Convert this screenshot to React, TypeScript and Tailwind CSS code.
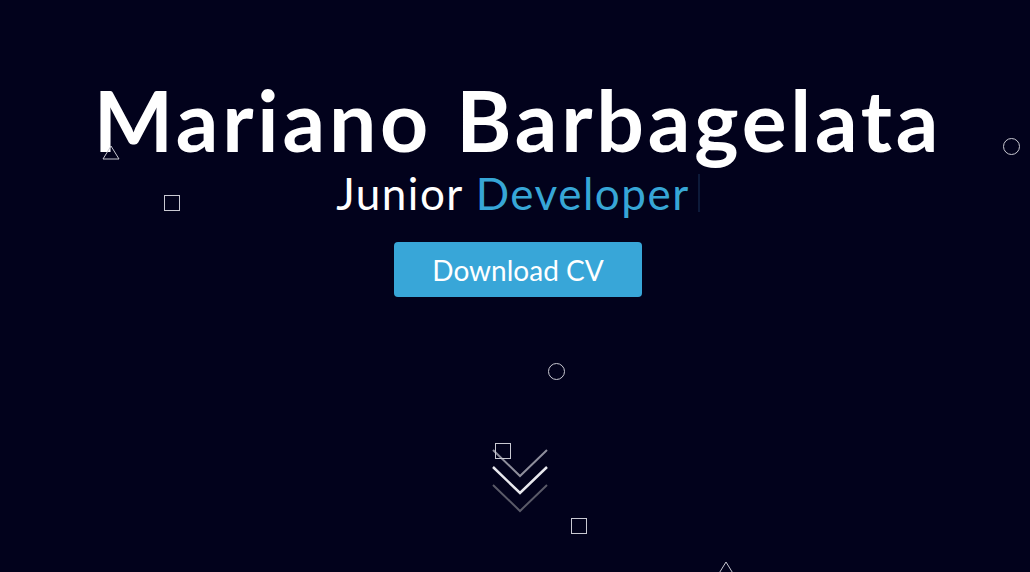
import React from 'react';

const Triangle = ({ className }: { className: string }) => (
  <svg className={className} width="18" height="15" viewBox="0 0 18 15" fill="none">
    <path d="M9 1 L17 14 L1 14 Z" stroke="#c9c9d2" strokeWidth="1" />
  </svg>
);

const Square = ({ className }: { className: string }) => (
  <div className={`absolute w-[16px] h-[16px] border border-[#c9c9d2] ${className}`} />
);

const Circle = ({ className }: { className: string }) => (
  <div className={`absolute w-[17px] h-[17px] rounded-full border border-[#c9c9d2] ${className}`} />
);

const Chevrons = () => (
  <svg width="56" height="70" viewBox="0 0 56 70" fill="none">
    <path d="M1 2 L28 28 L55 2" stroke="#8e8e9c" strokeWidth="2" />
    <path d="M1 19 L28 45 L55 19" stroke="#e8e8ee" strokeWidth="2.5" />
    <path d="M1 37 L28 63 L55 37" stroke="#5a5a68" strokeWidth="2" />
  </svg>
);

export default function App() {
  return (
    <div
      className="relative w-full h-[572px] overflow-hidden bg-[#02021c] text-white"
      style={{ fontFamily: 'Lato, "Noto Sans", sans-serif' }}
    >
      {/* floating particles */}
      <Triangle className="absolute left-[102px] top-[145px]" />
      <Square className="left-[164px] top-[195px]" />
      <Circle className="left-[1003px] top-[138px]" />
      <Circle className="left-[548px] top-[363px]" />
      <Square className="left-[495px] top-[443px]" />
      <Square className="left-[571px] top-[518px]" />
      <Triangle className="absolute left-[717px] top-[561px]" />

      <div className="flex flex-col items-center pt-[70px] pl-[6px]">
        <h1 className="text-[84px] font-bold leading-[100px] tracking-[3.8px]">Mariano Barbagelata</h1>
        <p className="text-[44px] leading-[50px] mt-[-2px] flex items-center tracking-[1.5px]">
          <span>Junior&nbsp;</span>
          <span className="text-[#37a6d6]">Developer</span>
          <span className="ml-[8px] w-[2px] h-[38px] bg-[#0d1a3a]" />
        </p>
        <button className="mt-[24px] w-[248px] h-[55px] rounded-[4px] bg-[#38a6d8] text-[28px] text-white">
          Download CV
        </button>
        <div className="mt-[151px] ml-[3px]">
          <Chevrons />
        </div>
      </div>
    </div>
  );
}
